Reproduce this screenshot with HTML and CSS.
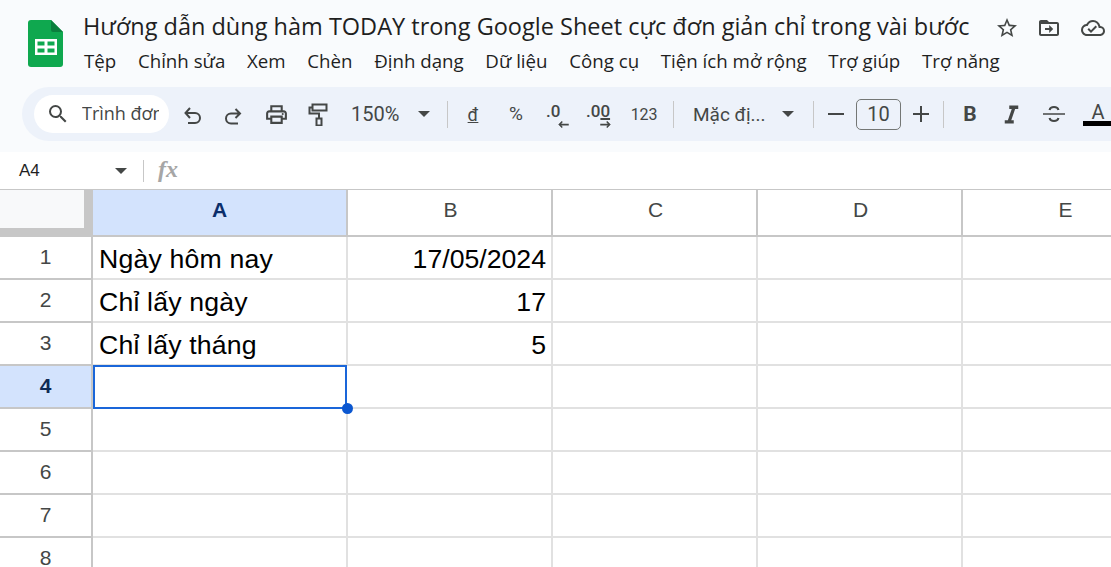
FILE: index.html
```html
<!DOCTYPE html>
<html lang="vi">
<head>
<meta charset="utf-8">
<title>Google Sheets</title>
<link rel="stylesheet" href="styles.css">
</head>
<body>
<header class="top">
  <div class="titlebar">
    <svg class="logo" viewBox="0 0 35 47"><path d="M3 0H23L35 12V44a3 3 0 0 1-3 3H3a3 3 0 0 1-3-3V3a3 3 0 0 1 3-3z" fill="#0fa84f"/><path d="M23 0L35 12H25a2 2 0 0 1-2-2z" fill="#0b7f3d"/><path d="M7 19H29V35H7zM9.500 21.500V25.500H16.500V21.500zM19.500 21.500V25.500H26.500V21.500zM9.500 28.500V32.500H16.500V28.500zM19.500 28.500V32.500H26.500V28.500z" fill="#fff" fill-rule="evenodd"/></svg>
    <div class="heading">
      <div class="title-row">
        <div class="doc-title">Hướng dẫn dùng hàm TODAY trong Google Sheet cực đơn giản chỉ trong vài bước</div>
        <svg class="ic star" viewBox="0 0 24 24"><path d="M22 9.240l-7.190-.620L12 2 9.190 8.630 2 9.240l5.460 4.730L5.820 21 12 17.270 18.180 21l-1.630-7.030L22 9.240zM12 15.400l-3.760 2.270 1-4.280-3.320-2.880 4.380-.380L12 6.100l1.710 4.040 4.380.380-3.320 2.880 1 4.280L12 15.400z"/></svg>
        <svg class="ic folder" viewBox="0 0 24 24"><path d="M20 6h-8l-2-2H4c-1.100 0-2 .900-2 2v12c0 1.100.900 2 2 2h16c1.100 0 2-.900 2-2V8c0-1.100-.900-2-2-2zm0 12H4V8h16v10zM12.200 17l4-4-4-4v3H8v2h4.200z"/></svg>
        <svg class="ic cloud" viewBox="0 0 24 24"><path d="M19.350 10.040A7.490 7.490 0 0 0 12 4C9.110 4 6.600 5.640 5.350 8.040A5.994 5.994 0 0 0 0 14c0 3.310 2.690 6 6 6h13c2.760 0 5-2.240 5-5 0-2.640-2.050-4.780-4.650-4.960zM19 18H6c-2.210 0-4-1.790-4-4 0-2.050 1.530-3.760 3.560-3.970l1.070-.110.500-.950A5.469 5.469 0 0 1 12 6c2.620 0 4.880 1.860 5.390 4.430l.300 1.500 1.530.110A2.980 2.980 0 0 1 22 15c0 1.650-1.350 3-3 3zm-9-3.820l-2.090-2.090L6.500 13.500 10 17l6.010-6.010-1.410-1.410z"/></svg>
      </div>
      <nav class="menu">
        <span>Tệp</span><span>Chỉnh sửa</span><span>Xem</span><span>Chèn</span><span>Định dạng</span><span>Dữ liệu</span><span>Công cụ</span><span>Tiện ích mở rộng</span><span>Trợ giúp</span><span>Trợ năng</span>
      </nav>
    </div>
  </div>
  <div class="toolbar">
    <div class="search">
      <svg class="ic search-ic" viewBox="0 0 24 24"><path d="M15.500 14h-.790l-.280-.270A6.471 6.471 0 0 0 16 9.500 6.500 6.500 0 1 0 9.500 16c1.610 0 3.090-.590 4.230-1.570l.270.280v.790l5 4.990L20.490 19l-4.990-5zm-6 0C7.010 14 5 11.990 5 9.500S7.010 5 9.500 5 14 7.010 14 9.500 11.990 14 9.500 14z"/></svg>
      <span class="search-text">Trình đơn</span>
    </div>
    <div class="btn"><svg class="tool" viewBox="0 0 24 24"><path class="line" d="M10 6L5.500 11l4.500 5M5.500 11H15a5 5 0 0 1 0 10H8"/></svg></div>
    <div class="btn"><svg class="tool" viewBox="0 0 24 24"><path class="line" d="M13.500 7L18 11.500 13.500 16M18 11.500H9a5 5 0 0 0 0 10h7"/></svg></div>
    <div class="btn"><svg class="tool print" viewBox="0 0 24 24"><path d="M19 8h-1V3H6v5H5c-1.660 0-3 1.340-3 3v6h4v4h12v-4h4v-6c0-1.660-1.340-3-3-3zM8 5h8v3H8V5zm8 14H8v-4h8v4zm4-4h-2v-2H6v2H4v-4c0-.550.450-1 1-1h14c.550 0 1 .450 1 1v4z"/><circle cx="18" cy="11.500" r="1"/></svg></div>
    <div class="btn"><svg class="tool" viewBox="0 0 24 24"><path class="line" d="M6.500 2.500h14v6h-14zM6.500 5.500H3.500v6H13v5M10.500 16.500h5v7h-5z"/></svg></div>
    <div class="zoom"><span>150%</span><i class="caret"></i></div>
    <i class="sep"></i>
    <div class="btn narrow fmt"><u>đ</u></div>
    <div class="btn fmt pct">%</div>
    <div class="btn stack one"><b>.0</b><svg class="arrow" viewBox="0 0 12 8"><path d="M4 0l1.200 1.200L3.400 3H12v2H3.400l1.800 1.800L4 8 0 4z"/></svg></div>
    <div class="btn stack two"><b>.0<u>0</u></b><svg class="arrow" viewBox="0 0 12 8"><path d="M8 0L6.800 1.200 8.600 3H0v2h8.600L6.800 6.800 8 8l4-4z"/></svg></div>
    <div class="btn fmt num">123</div>
    <i class="sep s2"></i>
    <div class="font"><span>Mặc đị...</span><i class="caret"></i></div>
    <i class="sep"></i>
    <div class="size">
      <svg class="pm" viewBox="0 0 16 16"><path d="M0 7h16v2H0z"/></svg>
      <span class="size-box">10</span>
      <svg class="pm" viewBox="0 0 16 16"><path d="M0 7h7V0h2v7h7v2H9v7H7V9H0z"/></svg>
    </div>
    <i class="sep"></i>
    <div class="btn style strong">B</div>
    <div class="btn"><svg class="italic" viewBox="0 0 24 24"><path d="M10 4v3h2.210l-3.420 10H6v3h8v-3h-2.210l3.420-10H18V4z"/></svg></div>
    <div class="btn"><svg class="tool" viewBox="0 0 24 24"><path class="strike" d="M1 12h22"/><path class="line" d="M7.500 8c.5-2 2-3 4.500-3s4 1 4.500 3M7.500 16c.5 2 2 3 4.500 3s4-1 4.500-3"/></svg></div>
    <div class="btn color"><span>A</span><i class="color-bar"></i></div>
  </div>
</header>
<div class="formula">
  <span class="cellref">A4</span><i class="caret"></i><i class="sep"></i><span class="fx">fx</span>
</div>
<main class="sheet">
  <div class="corner"></div>
  <div class="ch active">A</div><div class="ch">B</div><div class="ch">C</div><div class="ch">D</div><div class="ch">E</div>

  <div class="rh">1</div><div class="c">Ngày hôm nay</div><div class="c r">17/05/2024</div><div class="c"></div><div class="c"></div><div class="c"></div>
  <div class="rh">2</div><div class="c">Chỉ lấy ngày</div><div class="c r">17</div><div class="c"></div><div class="c"></div><div class="c"></div>
  <div class="rh">3</div><div class="c">Chỉ lấy tháng</div><div class="c r">5</div><div class="c"></div><div class="c"></div><div class="c"></div>
  <div class="rh active">4</div><div class="c selected"><i class="handle"></i></div><div class="c"></div><div class="c"></div><div class="c"></div><div class="c"></div>
  <div class="rh">5</div><div class="c"></div><div class="c"></div><div class="c"></div><div class="c"></div><div class="c"></div>
  <div class="rh">6</div><div class="c"></div><div class="c"></div><div class="c"></div><div class="c"></div><div class="c"></div>
  <div class="rh">7</div><div class="c"></div><div class="c"></div><div class="c"></div><div class="c"></div><div class="c"></div>
  <div class="rh">8</div><div class="c"></div><div class="c"></div><div class="c"></div><div class="c"></div><div class="c"></div>
</main>
</body>
</html>
```
FILE: styles.css
```css
* { box-sizing: border-box; }
html, body { margin: 0; padding: 0; height: 567px; overflow: hidden; background: #fff; }
body { width: 1111px; font-family: Roboto, "Noto Sans", sans-serif; color: #444746; }
i { font-style: normal; display: block; flex: none; }
svg { display: block; flex: none; fill: #444746; }
.line { fill: none; stroke: #444746; stroke-width: 2; }
.strike { fill: none; stroke: #444746; stroke-width: 1.600; }

.top { background: #f9fbfd; height: 152px; padding-top: 13px; overflow: hidden; }
.titlebar { display: flex; height: 61px; padding-left: 28px; }
.logo { width: 35px; height: 47px; margin: 7px 20px 0 0; }
.heading { flex: 1; min-width: 0; }
.title-row { display: flex; align-items: center; height: 26px; white-space: nowrap; }
.doc-title { width: 912px; flex: none; font-family: "Open Sans", sans-serif; font-size: 23.500px; line-height: 26px; color: #1f1f1f; }
.ic { width: 24px; height: 24px; }
.star { margin: 4px 18px 0 0; }
.folder { margin: 4px 20px 0 0; }
.cloud { margin-top: 4px; }
.menu { display: flex; gap: 21.700px; margin-top: 9px; padding-left: 1px; font-family: "Open Sans", sans-serif; font-size: 18.700px; line-height: 26px; color: #1f1f1f; white-space: nowrap; }

.toolbar { display: flex; align-items: center; height: 54px; margin: 13px 0 0 22px; padding-left: 12px; width: 1089px; border-radius: 27px 0 0 27px; background: #edf2fa; white-space: nowrap; overflow: hidden; }
.search { display: flex; align-items: center; width: 135px; height: 38px; flex: none; padding-left: 12px; margin-right: 2px; overflow: hidden; border-radius: 19px; background: #fff; }
.search-ic { margin-right: 12px; }
.search-text { width: 77px; overflow: hidden; margin-top: -2px; font-family: "Open Sans", sans-serif; font-size: 18px; color: #444746; }
.btn { display: flex; align-items: center; justify-content: center; flex: none; width: 42px; height: 38px; }
.tool { width: 24px; height: 24px; }
.print { width: 25px; height: 25px; }
.zoom { display: flex; align-items: center; flex: none; width: 108px; padding-left: 12px; font-size: 20px; }
.zoom span { width: 67px; }
.caret { width: 0; height: 0; border-left: 6px solid transparent; border-right: 6px solid transparent; border-top: 6px solid #444746; }
.sep { width: 1px; height: 27px; background: #c7c7c7; }
.fmt { font-size: 18px; }
.narrow { margin-left: 3px; padding-left: 2px; }
.pct { font-size: 19px; padding-left: 4px; padding-bottom: 2px; }
.stack { position: relative; flex-direction: column; align-items: flex-start; padding-top: 2px; }
.stack b { font-size: 17px; font-weight: 500; line-height: 17px; }
.stack u { text-decoration-thickness: 2px; text-underline-offset: 1px; }
.arrow { width: 11px; height: 7px; margin-top: 1px; }
.one { padding-left: 11px; }
.one .arrow { margin-left: 12px; }
.two { padding-left: 9px; }
.two .arrow { margin-left: 14px; }
.num { font-size: 16px; width: 44px; margin-right: 8px; margin-left: 2px; padding-left: 2px; letter-spacing: -.2px; }
.s2 { margin-right: 19px; }
.font { display: flex; align-items: center; flex: none; width: 120px; font-size: 19px; }
.font span { width: 89px; }
.size { display: flex; align-items: center; flex: none; width: 129px; padding: 0 14px; justify-content: space-between; }
.pm { width: 16px; height: 16px; }
.size-box { width: 45px; height: 31px; border: 1px solid #747775; border-radius: 5px; font-size: 20px; line-height: 29px; text-align: center; }
.style { font-size: 21px; }
.strong { font-weight: 700; margin-left: 5px; padding-bottom: 1px; }
.italic { width: 27px; height: 27px; margin-left: -2px; }
.color { position: relative; padding: 0 0 4px 4px; font-size: 20px; }
.color-bar { position: absolute; left: 8px; top: 26px; width: 40px; height: 5px; background: #000; }

.formula { display: flex; align-items: center; height: 38px; padding-left: 19px; border-bottom: 1px solid #c7c7c7; background: #fff; }
.cellref { width: 96px; font-family: "Liberation Sans", sans-serif; font-size: 17px; color: #1f1f1f; }
.formula .sep { margin: 0 14px 0 16px; height: 22px; }
.fx { margin-top: -2px; font-family: "Liberation Serif", serif; font-style: italic; font-weight: 700; font-size: 24px; color: #a6a6a6; }

.sheet { display: grid; grid-template-columns: 93px 255px repeat(4, 205px); grid-auto-rows: 43px; grid-template-rows: 47px; width: 1111px; height: 377px; overflow: hidden; font-family: "Liberation Sans", sans-serif; }
.corner { background: #f8f9fa; border-right: 9px solid #c7c7c7; border-bottom: 9px solid #c7c7c7; }
.ch { display: flex; align-items: center; justify-content: center; padding: 0 0 6px 2px; border-right: 2px solid #c7c7c7; border-bottom: 2px solid #c7c7c7; font-size: 21px; color: #444746; background: #fff; }
.ch.active { padding-left: 0; background: #d3e3fd; color: #0b2e6b; font-weight: 700; }
.rh { display: flex; align-items: center; justify-content: center; padding-bottom: 2px; border-right: 2px solid #c7c7c7; border-bottom: 2px solid #c7c7c7; font-size: 21px; color: #444746; line-height: 24px; }
.rh.active { background: #d3e3fd; color: #0f2a54; font-weight: 700; }
.c { position: relative; display: flex; align-items: center; padding: 4px 5px 0 6px; border-right: 2px solid #e1e1e1; border-bottom: 2px solid #e1e1e1; font-size: 26.670px; letter-spacing: .17px; color: #000; white-space: nowrap; }
.r { justify-content: flex-end; letter-spacing: 0; }
.selected { z-index: 1; border: 2px solid #1a66d9; margin: -1px 1px 0 0; }
.handle { position: absolute; right: -8px; bottom: -7px; width: 11px; height: 11px; border-radius: 50%; background: #0b57d0; }
```
